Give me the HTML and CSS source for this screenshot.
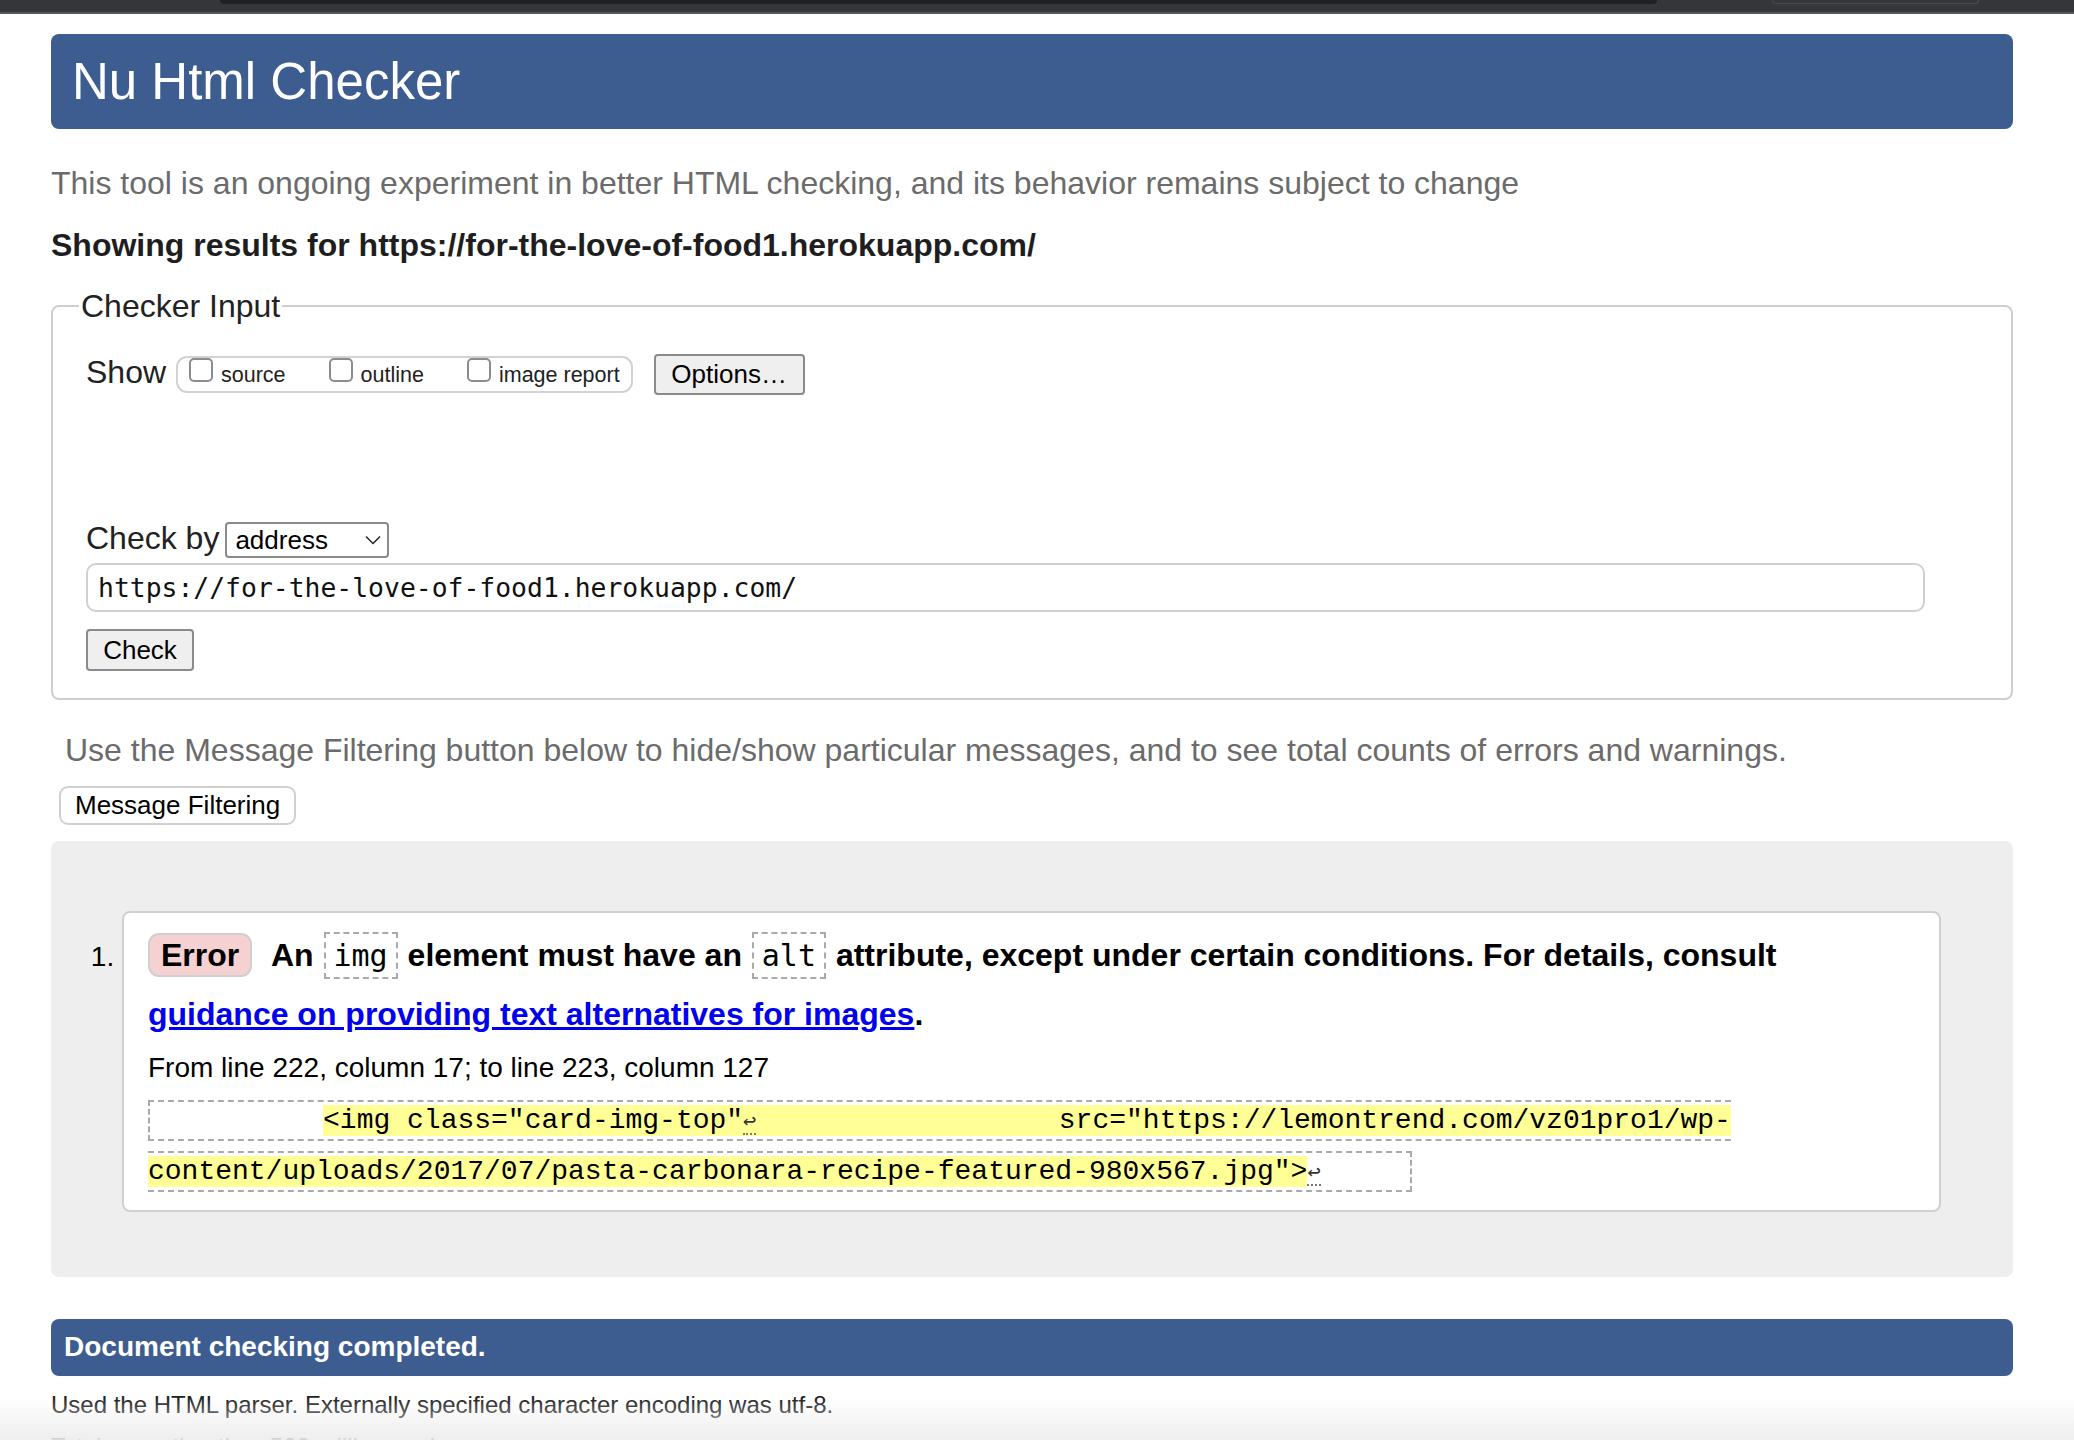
FILE: index.html
```html
<!DOCTYPE html>
<html lang="en">
<head>
<meta charset="utf-8">
<title>Nu Html Checker</title>
<link rel="stylesheet" href="styles.css">
</head>
<body>
<div class="chrome"><div class="chrome-tab"></div><div class="chrome-pill"></div></div>
<div class="page">
  <h1 class="title">Nu Html Checker</h1>
  <p class="intro">This tool is an ongoing experiment in better HTML checking, and its behavior remains subject to change</p>
  <p class="showing">Showing results for https://for-the-love-of-food1.herokuapp.com/</p>

  <fieldset class="checker">
    <legend class="checker-legend">Checker Input</legend>
    <div class="show-row">
      <span class="show-label">Show</span>
      <div class="show-group">
        <label class="opt"><input type="checkbox" class="cb">source</label>
        <label class="opt"><input type="checkbox" class="cb">outline</label>
        <label class="opt opt-last"><input type="checkbox" class="cb">image report</label>
      </div>
      <button class="btn btn-options" type="button">Options…</button>
    </div>
    <div class="by-row">
      <span class="by-label">Check by</span>
      <span class="select-wrap">
        <select class="by-select"><option>address</option></select>
        <svg class="chev" width="16" height="10" viewBox="0 0 16 10"><path d="M1 1.5 L8 8.5 L15 1.5" fill="none" stroke="#222" stroke-width="1.5"/></svg>
      </span>
    </div>
    <input class="url" type="text" value="https://for-the-love-of-food1.herokuapp.com/">
    <div><button class="btn btn-check" type="button">Check</button></div>
  </fieldset>

  <p class="filter-note">Use the Message Filtering button below to hide/show particular messages, and to see total counts of errors and warnings.</p>
  <button class="btn-filter" type="button">Message Filtering</button>

  <div class="results">
    <ol class="messages">
      <li class="msg">
        <p class="msg-text"><span class="badge">Error</span> An <code class="kw">img</code> element must have an <code class="kw">alt</code> attribute, except under certain conditions. For details, consult <a class="guide" href="#">guidance on providing text alternatives for images</a>.</p>
        <p class="location">From line 222, column 17; to line 223, column 127</p>
        <p class="extract"><code class="ex">          <b class="hl">&lt;img class="card-img-top"<span class="lf">↩</span>                  src="https://lemontrend.com/vz01pro1/wp-
content/uploads/2017/07/pasta-carbonara-recipe-featured-980x567.jpg"&gt;</b><span class="lf">↩</span>     </code></p>
      </li>
    </ol>
  </div>

  <div class="done">Document checking completed.</div>
  <p class="details">Used the HTML parser. Externally specified character encoding was utf-8.</p>
  <p class="details">Total execution time 522 milliseconds.</p>
</div>
<div class="fade"></div>
</body>
</html>
```
FILE: styles.css
```css
html, body {
  margin: 0;
  padding: 0;
}
body {
  height: 100vh;
  overflow: hidden;
  background: #fff;
  font-family: "Liberation Sans", Arial, Helvetica, sans-serif;
  color: #222;
}

/* browser chrome strip */
.chrome {
  height: 12px;
  background: #35363a;
  border-bottom: 2px solid #56575b;
  display: flex;
  align-items: flex-start;
}
.chrome-tab {
  margin-left: 220px;
  width: 1437px;
  height: 4px;
  background: #202124;
  border-radius: 0 0 6px 6px;
}
.chrome-pill {
  margin-left: 115px;
  width: 205px;
  height: 3px;
  border: 1px solid #4b4c50;
  border-top: none;
  border-radius: 0 0 6px 6px;
}

.page {
  padding: 0 61px 0 51px;
}

.title {
  margin: 20px 0 0;
  padding: 18px 21px;
  background: #3d5d91;
  color: #fff;
  font-size: 51px;
  font-weight: normal;
  line-height: 59px;
  border-radius: 8px;
}

.intro {
  margin: 36px 0 0;
  font-size: 32px;
  line-height: 37px;
  color: #6b6b6b;
}

.showing {
  margin: 25px 0 24px;
  font-size: 32px;
  line-height: 37px;
  font-weight: bold;
  color: #1e1e1e;
}

/* checker fieldset */
.checker {
  margin: 0;
  padding: 30px 33px 27px 33px;
  border: 2px solid #cfcfcf;
  border-radius: 8px;
  min-width: 0;
}
.checker-legend {
  margin-left: -7px;
  padding: 0 2px;
  font-size: 32px;
  line-height: 36px;
  color: #222;
}

.show-row {
  display: flex;
  align-items: flex-start;
  height: 41px;
}
.show-label {
  font-size: 32px;
  line-height: 37px;
  color: #222;
}
.show-group {
  display: flex;
  align-items: flex-start;
  box-sizing: border-box;
  height: 37px;
  margin: 2px 0 0 10px;
  padding: 0 11px 3px 11px;
  border: 2px solid #d2d2d2;
  border-radius: 11px;
}
.opt {
  display: block;
  margin-right: 43px;
  font-size: 21.5px;
  line-height: 26px;
  color: #222;
}
.opt-last {
  margin-right: 0;
}
.cb {
  -webkit-appearance: none;
  appearance: none;
  display: inline-block;
  box-sizing: border-box;
  width: 24px;
  height: 24px;
  margin: 0 8px 0 0;
  border: 2px solid #8c8c8c;
  border-radius: 5px;
  background: #fff;
  vertical-align: baseline;
}

.btn {
  box-sizing: border-box;
  font-family: "Liberation Sans", Arial, Helvetica, sans-serif;
  font-size: 26px;
  color: #000;
  background: #efefef;
  border: 2px solid #8a8a8a;
  border-radius: 4px;
  padding: 0;
}
.btn-options {
  width: 151px;
  height: 41px;
  margin-left: 21px;
}
.btn-check {
  width: 108px;
  height: 42px;
  margin-top: 17px;
}

.by-row {
  display: flex;
  align-items: baseline;
  margin-top: 125px;
}
.by-label {
  font-size: 32px;
  line-height: 37px;
  color: #222;
}
.select-wrap {
  position: relative;
  display: inline-block;
  margin-left: 6px;
}
.by-select {
  -webkit-appearance: none;
  appearance: none;
  box-sizing: border-box;
  width: 164px;
  height: 36px;
  padding: 0 0 0 8px;
  font-family: "Liberation Sans", Arial, Helvetica, sans-serif;
  font-size: 26px;
  color: #000;
  background: #fff;
  border: 2px solid #8a8a8a;
  border-radius: 4px;
}
.chev {
  position: absolute;
  right: 8px;
  top: 13px;
}

.url {
  display: block;
  box-sizing: border-box;
  width: 97.2%;
  height: 49px;
  margin: 5px 0 0;
  padding: 0 10px;
  font-family: "DejaVu Sans Mono", Menlo, monospace;
  font-size: 26.4px;
  color: #111;
  background: #fff;
  border: 2px solid #d0d0d0;
  border-radius: 10px;
}

.filter-note {
  margin: 32px 0 0;
  padding-left: 14px;
  font-size: 32px;
  line-height: 37px;
  color: #6b6b6b;
}
.btn-filter {
  display: block;
  box-sizing: border-box;
  height: 39px;
  margin: 17px 0 0 8px;
  padding: 0 14px;
  font-family: "Liberation Sans", Arial, Helvetica, sans-serif;
  font-size: 26px;
  color: #000;
  background: #fff;
  border: 2px solid #d0d0d0;
  border-radius: 9px;
}

/* results */
.results {
  margin-top: 16px;
  padding: 70px 72px 65px 71px;
  background: #eeeeee;
  border-radius: 8px;
}
.messages {
  margin: 0;
  padding: 0;
  list-style: decimal outside;
}
.msg {
  padding: 13px 24px 13px 24px;
  background: #fff;
  border: 2px solid #d0d0d0;
  border-radius: 8px;
  font-size: 28px;
  color: #000;
}
.msg-text {
  margin: 0;
  font-size: 32px;
  line-height: 59px;
  font-weight: bold;
  color: #000;
}
.badge {
  display: inline-block;
  margin-right: 11px;
  padding: 2px 11px;
  line-height: 36px;
  background: #f6d1d1;
  border: 2px solid #cfcfcf;
  border-radius: 11px;
}
.kw {
  font-family: "DejaVu Sans Mono", Menlo, monospace;
  font-size: 30px;
  font-weight: normal;
  line-height: 30px;
  padding: 4px 8px;
  margin: 0 1px;
  border: 2px dashed #a9a9a9;
}
.guide {
  color: #0000ee;
  text-decoration: underline;
}
.location {
  margin: 8px 0 0;
  font-size: 28px;
  line-height: 32px;
  color: #000;
}
.extract {
  margin: 11px 0 0;
  font-family: "Liberation Mono", "DejaVu Sans Mono", monospace;
  font-size: 28px;
  line-height: 51px;
  white-space: pre;
  color: #000;
}
.ex {
  font-family: inherit;
  padding: 3px 5px;
  border: 2px dashed #a9a9a9;
}
.hl {
  font-weight: normal;
  background: #ffff96;
}
.lf {
  font-family: "DejaVu Sans Mono", monospace;
  font-size: 22px;
  color: #333;
  border-bottom: 2px dotted #777;
}

.done {
  margin-top: 42px;
  padding: 12px 13px 13px;
  background: #3d5d91;
  color: #fff;
  font-size: 28px;
  font-weight: bold;
  line-height: 32px;
  border-radius: 8px;
}
.details {
  margin: 15px 0 0;
  font-size: 24px;
  line-height: 28px;
  color: #222;
}
.details + .details {
  margin-top: 14px;
}

.fade {
  position: fixed;
  left: 0;
  right: 0;
  bottom: 0;
  height: 42px;
  background: linear-gradient(to bottom, rgba(255, 255, 255, 0), rgba(236, 236, 236, 0.9));
  pointer-events: none;
}
```
